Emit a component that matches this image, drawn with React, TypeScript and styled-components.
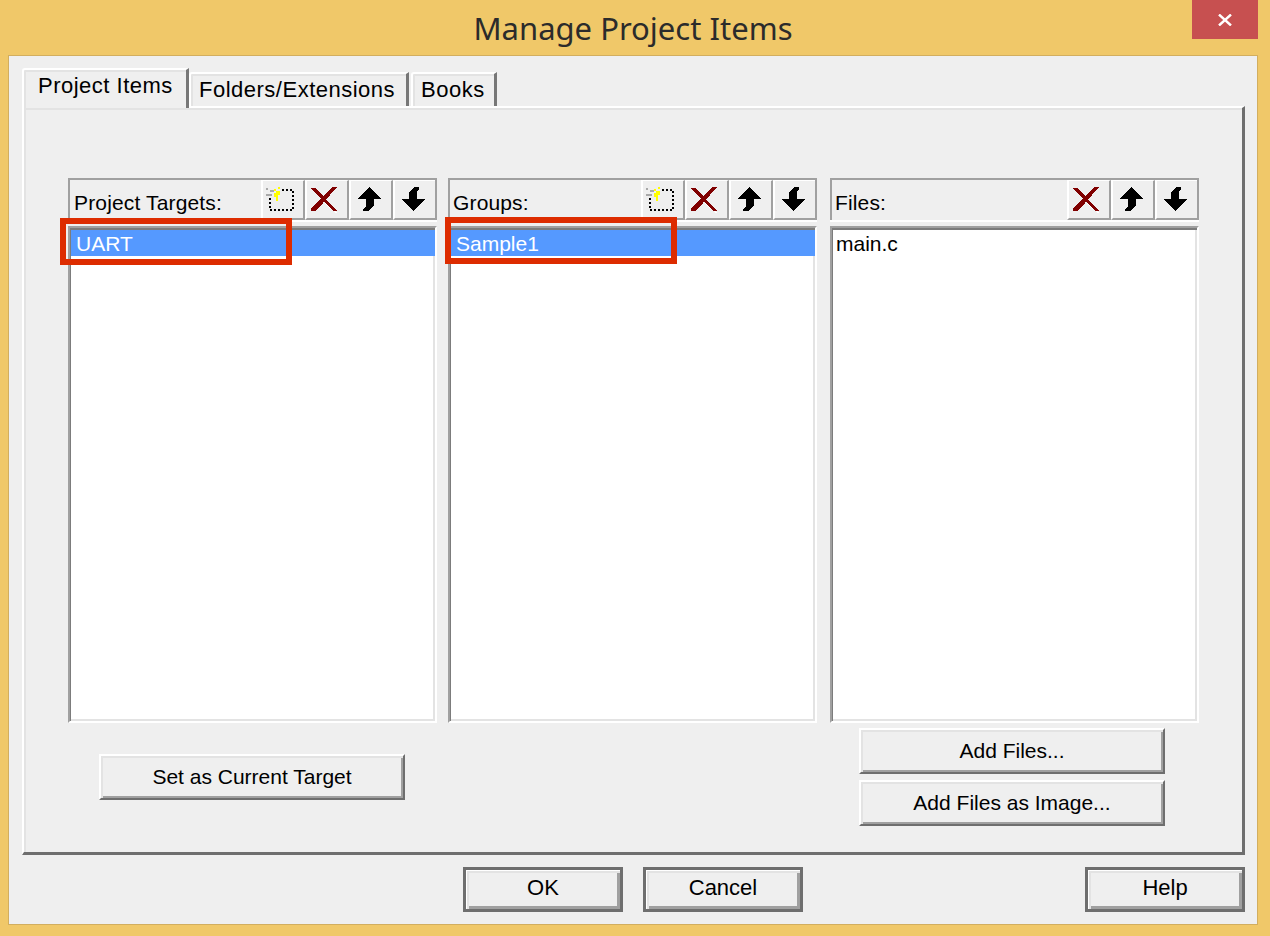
import React from 'react';
import styled, {createGlobalStyle} from 'styled-components';

const GlobalStyle = createGlobalStyle`
    html, body {
        margin: 0;
        padding: 0;
        background: #f0c869;
    }
    * {
        box-sizing: border-box;
    }
`;

const Frame = styled.div`
    position: relative;
    width: 1270px;
    height: 936px;
    padding: 0 12px 11px 8px;
    background: #f0c869;
    display: flex;
    flex-direction: column;
    overflow: hidden;
    font-family: "Liberation Sans", Arial, sans-serif;
    font-size: 21px;
    color: #000;
`;
const TitleBar = styled.div`
    height: 55px;
    text-align: center;
    font-family: "Noto Sans", sans-serif;
    font-size: 31px;
    line-height: 56px;
    color: #2b2b2b;
`;
const CloseButton = styled.div`
    position: absolute;
    top: 0;
    left: 1192px;
    width: 66px;
    height: 39px;
    background: #c75050;
    display: flex;
    align-items: center;
    justify-content: center;
`;
const Client = styled.div`
    flex: 1;
    background: #efefef;
    border: 1px solid #d2ae5f;
    padding: 12px 12px 0 13px;
`;
const TabRow = styled.div`
    display: flex;
    align-items: flex-end;
    height: 38px;
    position: relative;
    z-index: 1;
`;
const Tab = styled.div<{$active?: boolean; $width: number; $gap?: number}>`
    width: ${p => p.$width}px;
    height: ${p => (p.$active ? 40 : 34)}px;
    margin-right: ${p => p.$gap ?? 0}px;
    margin-bottom: ${p => (p.$active ? -2 : 0)}px;
    padding-left: ${p => (p.$active ? 14 : 8)}px;
    background: #efefef;
    border-top: 2px solid #fff;
    border-left: 2px solid #fff;
    border-right: 3px solid #777;
    box-shadow: inset 0 2px 0 #e3e3e3, inset 2px 0 0 #e3e3e3;
    border-top-left-radius: 3px;
    font-size: 22px;
    line-height: 32px;
    letter-spacing: 0.5px;
    white-space: nowrap;
`;
const TabPanel = styled.div`
    height: 749px;
    background: #efefef;
    border-top: 2px solid #fff;
    border-left: 2px solid #fff;
    border-right: 3px solid #6e6e6e;
    border-bottom: 3px solid #6e6e6e;
    box-shadow: inset 2px 2px 0 #e3e3e3;
    padding: 70px 0 0 44px;
`;
const Columns = styled.div`
    display: grid;
    grid-template-columns: 380px 382px 369px;
    grid-template-rows: 545px auto;
`;
const ListColumn = styled.div`
    position: relative;
    width: 369px;
    display: flex;
    flex-direction: column;
    gap: 6px;
`;
const ListHeader = styled.div`
    height: 42px;
    display: flex;
    align-items: stretch;
    justify-content: space-between;
    background: #efefef;
    border-top: 2px solid #a0a0a0;
    border-left: 2px solid #a0a0a0;
    border-right: 2px solid #a0a0a0;
    box-shadow: 0 2px 0 #fff;
`;
const HeaderLabel = styled.div<{$indent: number}>`
    padding-left: ${p => p.$indent}px;
    line-height: 46px;
    letter-spacing: 0.15px;
`;
const ToolGroup = styled.div`
    display: flex;
`;
const ToolButton = styled.div`
    width: 44px;
    padding-right: 2px;
    display: flex;
    align-items: center;
    justify-content: center;
    border-left: 2px solid #fff;
    border-top: 1px solid #fff;
    border-right: 2px solid #a0a0a0;
    border-bottom: 2px solid #a0a0a0;
    &:last-child {
        width: 42px;
        border-right: none;
    }
`;
const ListBox = styled.div`
    flex: 1;
    background: #fff;
    padding: 2px 0 2px 1px;
    border-top: 2px solid #a0a0a0;
    border-left: 2px solid #a0a0a0;
    border-right: 2px solid #fff;
    border-bottom: 2px solid #fff;
    box-shadow: inset 1px 2px 0 #7c7c7c, inset -2px -2px 0 #e3e3e3;
`;
const ListRow = styled.div<{$selected?: boolean; $indent: number}>`
    height: 26px;
    padding-left: ${p => p.$indent}px;
    line-height: 27px;
    background: ${p => (p.$selected ? '#5599ff' : 'transparent')};
    color: ${p => (p.$selected ? '#fff' : '#000')};
`;
const Highlight = styled.div<{$left: number; $top: number}>`
    position: absolute;
    left: ${p => p.$left}px;
    top: ${p => p.$top}px;
    width: 232px;
    height: 47px;
    border: 6px solid #dd2c00;
`;
const ActionCell = styled.div<{$offset: number}>`
    display: flex;
    flex-direction: column;
    gap: 6px;
    padding-top: ${p => p.$offset}px;
`;
const Button = styled.div<{$ml: number}>`
    width: 306px;
    height: 46px;
    margin-left: ${p => p.$ml}px;
    text-align: center;
    line-height: 41px;
    background: #efefef;
    border-top: 2px solid #fff;
    border-left: 2px solid #fff;
    border-right: 2px solid #6e6e6e;
    border-bottom: 2px solid #6e6e6e;
    box-shadow: inset 2px 2px 0 #e3e3e3, inset -2px -2px 0 #a0a0a0;
`;
const Footer = styled.div`
    display: flex;
    align-items: center;
    padding: 12px 0 0 441px;
`;
const DialogButton = styled.div<{$ml?: number}>`
    width: 160px;
    height: 45px;
    margin-left: ${p => p.$ml ?? 0}px;
    text-align: center;
    font-size: 22px;
    line-height: 35px;
    background: #efefef;
    border: 3px solid #6e6e6e;
    box-shadow: inset 1px 1px 0 #fff, inset 3px 3px 0 #e3e3e3, inset -3px -3px 0 #a0a0a0;
`;

const NewIcon = () => (
    <svg width="32" height="26" viewBox="0 0 32 26" shapeRendering="crispEdges">
        <path d="M16 3H27V23H4V11" stroke="#000" strokeWidth="2" strokeDasharray="2 2" fill="none"/>
        <path d="M0 1h2v2H0zM4 3h4v2H4zM0 7h6v2H0z" fill="#a8a8a8"/>
        <path d="M12 0h2v2h-2zM8 2h2v2H8zM10 4h4v2h-4zM8 6h6v2H8zM8 8h4v2H8zM10 10h2v4h-2z" fill="#ffff00"/>
    </svg>
);
const DeleteIcon = () => (
    <svg width="32" height="26" viewBox="0 0 32 26" shapeRendering="crispEdges">
        <path d="M15 16L27 26" stroke="#fff" strokeWidth="1.5" fill="none"/>
        <path d="M0 1H6L27 24H24Z" fill="#800000"/>
        <path d="M22 0H27L6 24H1V21Z" fill="#800000"/>
    </svg>
);
const UpIcon = () => (
    <svg width="24" height="25" viewBox="0 0 24 25" shapeRendering="crispEdges">
        <path d="M11 0L23 11V12H16V19L12 22L10 24H5V22L8 19V12H0V11Z" fill="#000"/>
    </svg>
);
const DownIcon = () => (
    <svg width="24" height="25" viewBox="0 0 24 25" shapeRendering="crispEdges">
        <path d="M11 24L0 13V12H7V6L10 2L12 0H17V2L15 5V12H23V13Z" fill="#000"/>
    </svg>
);

interface PaneProps {
    label: string;
    row: string;
    labelIndent: number;
    rowIndent: number;
    selected?: boolean;
    canAdd?: boolean;
    children?: React.ReactNode;
}
function Pane({label, row, labelIndent, rowIndent, selected, canAdd, children}: PaneProps) {
    return (
        <ListColumn>
            <ListHeader>
                <HeaderLabel $indent={labelIndent}>{label}</HeaderLabel>
                <ToolGroup>
                    {canAdd && <ToolButton><NewIcon/></ToolButton>}
                    <ToolButton><DeleteIcon/></ToolButton>
                    <ToolButton><UpIcon/></ToolButton>
                    <ToolButton><DownIcon/></ToolButton>
                </ToolGroup>
            </ListHeader>
            <ListBox>
                <ListRow $selected={selected} $indent={rowIndent}>{row}</ListRow>
            </ListBox>
            {children}
        </ListColumn>
    );
}

function App() {
    return (
        <Frame>
            <GlobalStyle/>
            <TitleBar>Manage Project Items</TitleBar>
            <CloseButton>
                <svg width="14" height="12" viewBox="0 0 14 12">
                    <path d="M1 0.5L13 11.5M13 0.5L1 11.5" stroke="#fff" strokeWidth="2.4" fill="none"/>
                </svg>
            </CloseButton>
            <Client>
                <TabRow>
                    <Tab $active $width={167}>Project Items</Tab>
                    <Tab $width={220} $gap={2}>Folders/Extensions</Tab>
                    <Tab $width={86}>Books</Tab>
                </TabRow>
                <TabPanel>
                    <Columns>
                        <Pane label="Project Targets:" row="UART" labelIndent={4} rowIndent={5} selected canAdd>
                            <Highlight $left={-8} $top={40}/>
                        </Pane>
                        <Pane label="Groups:" row="Sample1" labelIndent={3} rowIndent={5} selected canAdd>
                            <Highlight $left={-3} $top={39}/>
                        </Pane>
                        <Pane label="Files:" row="main.c" labelIndent={3} rowIndent={3}/>
                        <ActionCell $offset={31}>
                            <Button $ml={31}>Set as Current Target</Button>
                        </ActionCell>
                        <div/>
                        <ActionCell $offset={5}>
                            <Button $ml={29}>Add Files...</Button>
                            <Button $ml={29}>Add Files as Image...</Button>
                        </ActionCell>
                    </Columns>
                </TabPanel>
                <Footer>
                    <DialogButton>OK</DialogButton>
                    <DialogButton $ml={20}>Cancel</DialogButton>
                    <DialogButton $ml={282}>Help</DialogButton>
                </Footer>
            </Client>
        </Frame>
    );
}

export default App;
